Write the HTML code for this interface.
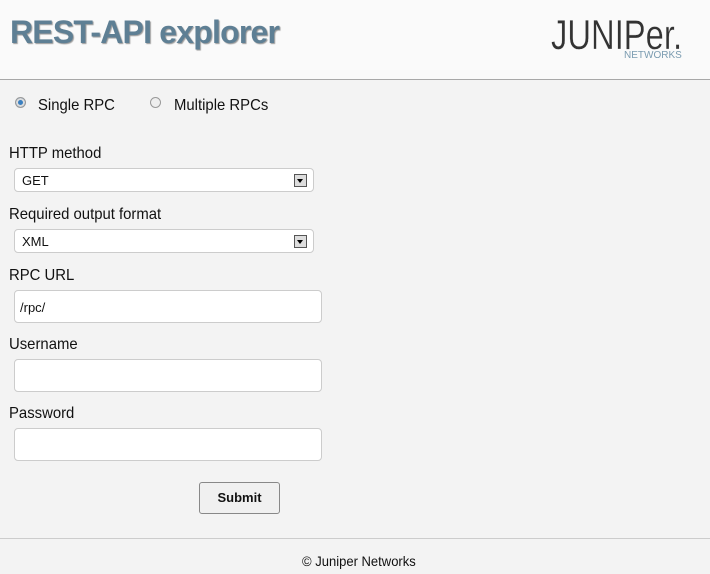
<!DOCTYPE html>
<html><head><style>
body{margin:0;width:710px;height:574px;background:#f3f3f3;font-family:"Liberation Sans",sans-serif;position:relative;overflow:hidden;color:#111}
.hdr{position:absolute;left:0;top:0;width:710px;height:79px;background:#fafafa;border-bottom:1px solid #a8a8a8}
.title{position:absolute;left:10px;top:14px;font-size:32px;font-weight:bold;color:#5e7f94;text-shadow:1px 1px 1px #999;letter-spacing:-0.8px}
.logo{position:absolute;left:551px;top:14px;font-size:42px;color:#333;letter-spacing:0px;line-height:42px;transform:scaleX(0.78);transform-origin:left;-webkit-text-stroke:0.3px #fafafa}
.nw{position:absolute;left:624px;top:50px;font-size:10px;color:#7a9bb0}
.t{position:absolute;font-size:16px;transform:scaleX(0.93);transform-origin:left}
.r{position:absolute;width:9px;height:9px;border-radius:50%;border:1px solid #999;background:#eee}
.sel{position:absolute;left:14px;width:298px;height:22px;background:#fff;border:1px solid #ccc;border-radius:4px;font-size:13px}
.sel span{position:absolute;left:7px;top:4px}
.sel i{position:absolute;right:6px;top:5px;width:11px;height:11px;border:1px solid #555;background:#ddd}
.sel i:after{content:"";position:absolute;left:2px;top:4px;border:3.5px solid transparent;border-top:4px solid #000}
.in{position:absolute;left:14px;width:306px;height:31px;background:#fff;border:1px solid #ccc;border-radius:4px;font-size:13px}
.btn{position:absolute;left:199px;top:482px;width:79px;height:30px;border:1px solid #888;border-radius:3px;background:#f0f0f0;font-weight:bold;font-size:13px;text-align:center;line-height:30px}
.ft{position:absolute;left:0;top:538px;width:710px;border-top:1px solid #ccc}
</style></head><body>
<div class="hdr"><div class="title">REST-API explorer</div><div class="logo">JUNIPer.</div><div class="nw">NETWORKS</div></div>
<div class="r" style="left:15px;top:97px;background:#3a7fc0;box-shadow:inset 0 0 0 2px #ddd"></div>
<div class="t" style="left:38px;top:97px">Single RPC</div>
<div class="r" style="left:150px;top:97px"></div>
<div class="t" style="left:174px;top:97px">Multiple RPCs</div>
<div class="t" style="left:9px;top:145px">HTTP method</div>
<div class="sel" style="top:168px"><span>GET</span><i></i></div>
<div class="t" style="left:9px;top:206px">Required output format</div>
<div class="sel" style="top:229px"><span>XML</span><i></i></div>
<div class="t" style="left:9px;top:267px">RPC URL</div>
<div class="in" style="top:290px"><span style="position:absolute;left:5px;top:9px">/rpc/</span></div>
<div class="t" style="left:9px;top:336px">Username</div>
<div class="in" style="top:359px"></div>
<div class="t" style="left:9px;top:405px">Password</div>
<div class="in" style="top:428px"></div>
<div class="btn">Submit</div>
<div class="ft"></div>
<div class="t" style="left:302px;top:553px;font-size:14px">© Juniper Networks</div>
</body></html>
